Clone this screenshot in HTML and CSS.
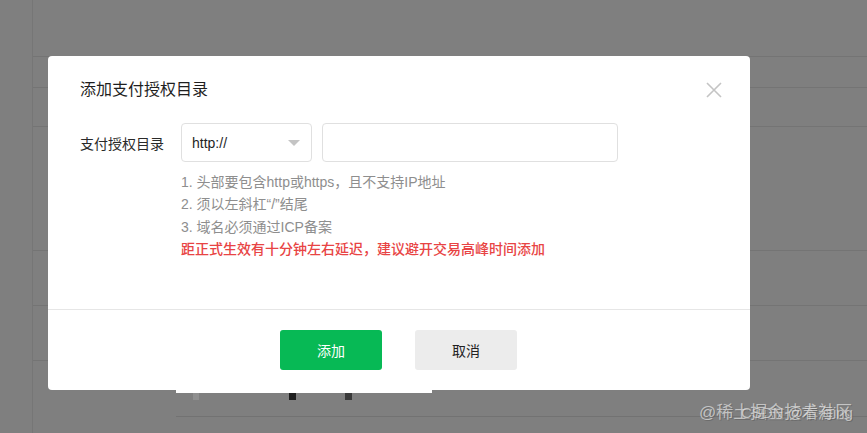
FILE: index.html
```html
<!DOCTYPE html>
<html lang="zh-CN">
<head>
<meta charset="utf-8">
<title>添加支付授权目录</title>
<link rel="stylesheet" href="styles.css">
</head>
<body>
<div class="page">
  <div class="bg-row h1"></div>
  <div class="bg-row h2"></div>
  <div class="bg-row h3"></div>
  <div class="bg-row h4"></div>
  <div class="bg-row h5"></div>
  <div class="bg-row h6"></div>
  <div class="bg-bottom">
    <div class="bg-line"></div>
  </div>
</div>

<div class="peek">
  <span class="mark m1"></span>
  <span class="mark m2"></span>
  <span class="mark m3"></span>
</div>

<div class="modal">
  <div class="modal-main">
    <div class="modal-head">
      <h2 class="modal-title">添加支付授权目录</h2>
      <button class="close" aria-label="关闭">
        <svg width="16" height="16" viewBox="0 0 16 16"><path d="M1 1 L15 15 M15 1 L1 15" stroke="#c4c4c4" stroke-width="1.6" fill="none"/></svg>
      </button>
    </div>
    <div class="form-row">
      <div class="label">支付授权目录</div>
      <div class="fields">
        <div class="select">
          <span class="select-text">http://</span>
          <span class="caret"></span>
        </div>
        <div class="input"></div>
      </div>
    </div>
    <div class="hints">
      <p class="hint">1. 头部要包含http或https，且不支持IP地址</p>
      <p class="hint">2. 须以左斜杠“/”结尾</p>
      <p class="hint">3. 域名必须通过ICP备案</p>
      <p class="hint warn">距正式生效有十分钟左右延迟，建议避开交易高峰时间添加</p>
    </div>
  </div>
  <div class="modal-foot">
    <button class="btn primary">添加</button>
    <button class="btn default">取消</button>
  </div>
</div>

<div class="watermark">
  <span class="wm wm1">@稀土掘金技术社区</span>
  <span class="wm wm2">CSDN @看海ing</span>
</div>
</body>
</html>
```

FILE: styles.css
```css
* { box-sizing: border-box; }
html, body {
  margin: 0;
  padding: 0;
  width: 867px;
  height: 433px;
  overflow: hidden;
  background: #7f7f7f;
  font-family: "Liberation Sans", "Noto Sans CJK SC", sans-serif;
}

.page {
  margin-left: 32px;
  height: 433px;
  border-left: 1px solid #767676;
  display: flex;
  flex-direction: column;
}
.bg-row { border-bottom: 1px solid #747474; }
.h1 { height: 57px; }
.h2 { height: 31px; }
.h3 { height: 39px; }
.h4 { height: 124px; }
.h5 { height: 55px; }
.h6 { height: 55px; }
.bg-bottom { flex: 1; display: flex; flex-direction: column; justify-content: flex-end; padding-bottom: 16px; }
.bg-line { margin-left: 143px; border-bottom: 1px solid #727272; }

.peek {
  position: absolute;
  left: 176px;
  top: 388px;
  width: 256px;
  height: 5px;
  background: #fff;
}
.mark { position: absolute; top: 5px; width: 7px; height: 7px; }
.m1 { left: 17px; background: #8f8f8f; width: 6px; }
.m2 { left: 113px; background: #1e1e1e; }
.m3 { left: 169px; background: #3a3a3a; }

.modal {
  position: absolute;
  left: 48px;
  top: 56px;
  width: 702px;
  height: 334px;
  background: #fff;
  border-radius: 4px;
  display: flex;
  flex-direction: column;
}
.modal-main { flex: 1; padding: 22px 28px 0 32px; }
.modal-head { display: flex; align-items: center; justify-content: space-between; height: 24px; }
.modal-title {
  margin: 0;
  font-size: 16px;
  line-height: 24px;
  font-weight: normal;
  color: #1f1f1f;
}
.close {
  border: 0;
  background: none;
  padding: 0;
  width: 16px;
  height: 16px;
  display: flex;
}

.form-row { display: flex; align-items: center; margin-top: 21px; }
.label { width: 101px; font-size: 14px; color: #2a2a2a; }
.fields { display: flex; gap: 10px; }
.select {
  width: 131px;
  height: 39px;
  border: 1px solid #e0e0e0;
  border-radius: 4px;
  display: flex;
  align-items: center;
  justify-content: space-between;
  padding: 0 11px 0 10px;
}
.select-text { font-size: 14px; color: #1f1f1f; }
.caret {
  width: 0;
  height: 0;
  border-left: 6px solid transparent;
  border-right: 6px solid transparent;
  border-top: 6px solid #c4c4c4;
  margin-top: 1px;
}
.input {
  width: 296px;
  height: 39px;
  border: 1px solid #e0e0e0;
  border-radius: 4px;
}

.hints { margin: 9px 0 0 101px; }
.hint { margin: 0; font-size: 14px; line-height: 22.4px; color: #8e8e8e; }
.warn { color: #e84444; font-weight: 500; }

.modal-foot {
  height: 81px;
  border-top: 1px solid #e6e6e6;
  display: flex;
  justify-content: center;
  align-items: center;
  gap: 33px;
  padding-right: 1px;
}
.btn {
  width: 102px;
  height: 40px;
  border: 0;
  border-radius: 3px;
  font-size: 14px;
  font-family: "Liberation Sans", "Noto Sans CJK SC", sans-serif;
}
.primary { background: #07b955; color: #fff; }
.default { background: #ececec; color: #222; }

.watermark {
  position: absolute;
  left: 699px;
  top: 401px;
  width: 168px;
  height: 24px;
}
.wm {
  position: absolute;
  top: 0;
  font-size: 17px;
  line-height: 24px;
  color: rgba(220, 220, 220, 0.75);
  text-shadow: 1px 1px 0 rgba(90, 90, 90, 0.5);
  white-space: nowrap;
}
.wm1 { left: 0; }
.wm2 { left: 42px; font-size: 15px; }
```
